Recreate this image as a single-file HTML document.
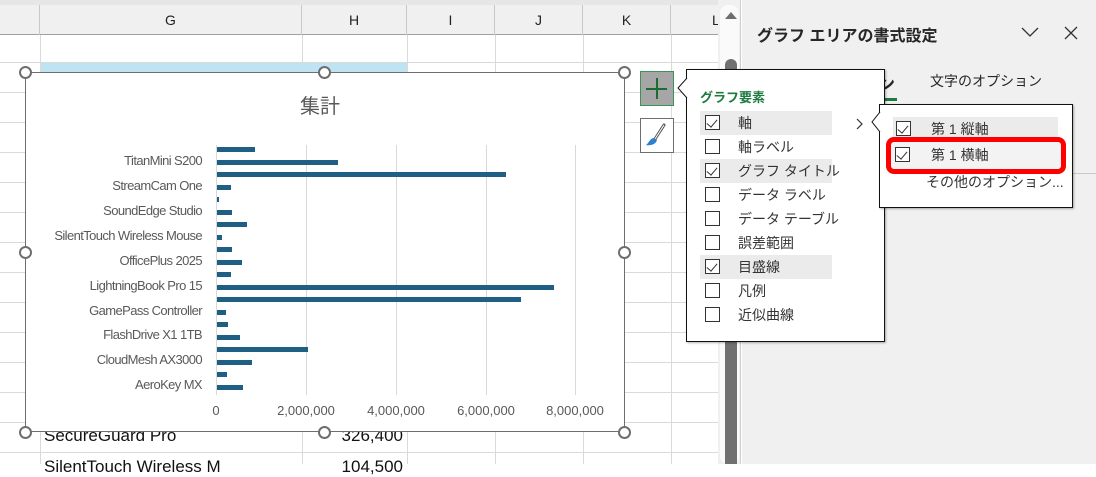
<!DOCTYPE html>
<html><head><meta charset="utf-8">
<style>
*{margin:0;padding:0;box-sizing:border-box}
body{width:1096px;height:464px;overflow:hidden;background:#fff;position:relative;font-family:"Liberation Sans","Noto Sans CJK JP",sans-serif;}
.a{position:absolute}
.vl{position:absolute;top:35px;width:1px;height:429px;background:#dadada}
.hl{position:absolute;left:0;width:718px;height:1px;background:#dadada}
.ch{position:absolute;top:5px;height:30px;font-size:14px;color:#222;text-align:center;line-height:30px;border-right:1px solid #c8c8c8}
.lab{position:absolute;right:894px;font-size:13px;color:#595959;letter-spacing:-0.6px;white-space:nowrap}
.bar{position:absolute;left:217px;height:5px;background:#1f5f83}
.hd{position:absolute;width:13px;height:13px;border:2px solid #6e6e6e;border-radius:50%;background:#fff}
.it{position:absolute;left:700px;width:132px;height:24px;font-size:14px;color:#333;line-height:24px}
.it.h{background:#ebebeb}
.cb{position:absolute;left:5px;top:4px;width:15px;height:15px;border:1px solid #333;background:#fff}
.cb.k::after{content:"";position:absolute;left:3px;top:1px;width:5px;height:9px;border-right:1px solid #333;border-bottom:1px solid #333;transform:rotate(40deg)}
.it span{position:absolute;left:38px;white-space:nowrap}
</style></head><body>
<div class="a" style="left:0;top:0;width:718px;height:5px;background:#e6e6e6"></div>
<div class="a" style="left:0;top:5px;width:718px;height:30px;background:#f0f0f0;border-bottom:1px solid #a0a0a0"></div>
<div class="ch" style="left:0;width:40px">&nbsp;</div>
<div class="ch" style="left:40px;width:262px">G</div>
<div class="ch" style="left:302px;width:105px">H</div>
<div class="ch" style="left:407px;width:88px">I</div>
<div class="ch" style="left:495px;width:88px">J</div>
<div class="ch" style="left:583px;width:88px">K</div>
<div class="ch" style="left:671px;width:47px;border:none;text-align:left;padding-left:41px">L</div>
<div class="vl" style="left:40px"></div><div class="vl" style="left:302px"></div><div class="vl" style="left:407px"></div><div class="vl" style="left:495px"></div><div class="vl" style="left:583px"></div><div class="vl" style="left:671px"></div>
<div class="hl" style="top:62px"></div><div class="hl" style="top:92px"></div><div class="hl" style="top:122px"></div><div class="hl" style="top:152px"></div><div class="hl" style="top:182px"></div><div class="hl" style="top:212px"></div><div class="hl" style="top:242px"></div><div class="hl" style="top:272px"></div><div class="hl" style="top:302px"></div><div class="hl" style="top:332px"></div><div class="hl" style="top:362px"></div><div class="hl" style="top:392px"></div><div class="hl" style="top:422px"></div><div class="hl" style="top:452px"></div>
<div class="a" style="left:41px;top:63px;width:366px;height:29px;background:#bfe3f3"></div>
<div class="a" style="left:44px;top:426px;font-size:17px;color:#111">SecureGuard Pro</div>
<div class="a" style="left:300px;top:426px;width:103px;text-align:right;font-size:17px;color:#111">326,400</div>
<div class="a" style="left:44px;top:457px;font-size:17px;color:#111">SilentTouch Wireless M</div>
<div class="a" style="left:300px;top:457px;width:103px;text-align:right;font-size:17px;color:#111">104,500</div>
<div class="a" style="left:25px;top:72px;width:600px;height:360px;background:#fff;border:1px solid #6e6e6e"></div>
<div class="a" style="left:300px;top:90px;font-size:20px;color:#595959">集計</div>
<div class="a" style="left:306px;top:145px;width:1px;height:250px;background:#d9d9d9"></div>
<div class="a" style="left:396px;top:145px;width:1px;height:250px;background:#d9d9d9"></div>
<div class="a" style="left:486px;top:145px;width:1px;height:250px;background:#d9d9d9"></div>
<div class="a" style="left:575px;top:145px;width:1px;height:250px;background:#d9d9d9"></div>
<div class="a" style="left:216px;top:145px;width:1px;height:250px;background:#d9d9d9"></div>
<div class="bar" style="top:147px;width:38px"></div><div class="bar" style="top:160px;width:121px"></div><div class="bar" style="top:172px;width:289px"></div><div class="bar" style="top:185px;width:14px"></div><div class="bar" style="top:197px;width:2px"></div><div class="bar" style="top:210px;width:15px"></div><div class="bar" style="top:222px;width:30px"></div><div class="bar" style="top:235px;width:5px"></div><div class="bar" style="top:247px;width:15px"></div><div class="bar" style="top:260px;width:25px"></div><div class="bar" style="top:272px;width:14px"></div><div class="bar" style="top:285px;width:337px"></div><div class="bar" style="top:297px;width:304px"></div><div class="bar" style="top:310px;width:9px"></div><div class="bar" style="top:322px;width:11px"></div><div class="bar" style="top:335px;width:23px"></div><div class="bar" style="top:347px;width:91px"></div><div class="bar" style="top:360px;width:35px"></div><div class="bar" style="top:372px;width:10px"></div><div class="bar" style="top:385px;width:26px"></div>
<div class="lab" style="top:153px">TitanMini S200</div>
<div class="lab" style="top:178px">StreamCam One</div>
<div class="lab" style="top:203px">SoundEdge Studio</div>
<div class="lab" style="top:228px">SilentTouch Wireless Mouse</div>
<div class="lab" style="top:253px">OfficePlus 2025</div>
<div class="lab" style="top:278px">LightningBook Pro 15</div>
<div class="lab" style="top:303px">GamePass Controller</div>
<div class="lab" style="top:327px">FlashDrive X1 1TB</div>
<div class="lab" style="top:352px">CloudMesh AX3000</div>
<div class="lab" style="top:377px">AeroKey MX</div>
<div class="a" style="left:176px;top:403px;width:80px;text-align:center;font-size:13px;color:#595959">0</div>
<div class="a" style="left:256px;top:403px;width:100px;text-align:center;font-size:13px;color:#595959">2,000,000</div>
<div class="a" style="left:346px;top:403px;width:100px;text-align:center;font-size:13px;color:#595959">4,000,000</div>
<div class="a" style="left:436px;top:403px;width:100px;text-align:center;font-size:13px;color:#595959">6,000,000</div>
<div class="a" style="left:525px;top:403px;width:100px;text-align:center;font-size:13px;color:#595959">8,000,000</div>
<div class="hd" style="left:19px;top:66px"></div><div class="hd" style="left:318px;top:66px"></div><div class="hd" style="left:618px;top:66px"></div>
<div class="hd" style="left:19px;top:246px"></div><div class="hd" style="left:618px;top:246px"></div>
<div class="hd" style="left:19px;top:426px"></div><div class="hd" style="left:318px;top:426px"></div><div class="hd" style="left:618px;top:426px"></div>
<div class="a" style="left:640px;top:71px;width:34px;height:35px;background:#a6a6a6;border:1px solid #3f8f5a"></div>
<div class="a" style="left:646px;top:88px;width:21px;height:1.5px;background:#1e6b30"></div>
<div class="a" style="left:656px;top:78px;width:1.5px;height:21px;background:#1e6b30"></div>
<div class="a" style="left:640px;top:118px;width:34px;height:35px;background:#fff;border:1px solid #6e6e6e"></div>
<svg class="a" style="left:640px;top:118px" width="34" height="35"><path d="M24 7 L15 21" stroke="#555" stroke-width="3" stroke-linecap="round"/><path d="M24 7 L15 21" stroke="#fff" stroke-width="1"/><path d="M14 20 C10 20 9 25 6 27 C11 28 16 26 17 22 Z" fill="#2f7fd0"/></svg>
<div class="a" style="left:718px;top:0;width:23px;height:464px;background:#f0f0f0;border-right:1px solid #cfcfcf"></div>
<div class="a" style="left:720px;top:5px;width:19px;height:459px;background:#fafafa;border-radius:8px"></div>
<div class="a" style="left:725px;top:12px;width:0;height:0;border-left:6px solid transparent;border-right:6px solid transparent;border-bottom:7px solid #6e6e6e"></div>
<div class="a" style="left:725px;top:59px;width:12px;height:405px;background:#707070;border-radius:6px 6px 0 0"></div>
<div class="a" style="left:742px;top:0;width:354px;height:464px;background:#f0f0f0"></div>
<div class="a" style="left:757px;top:22px;font-size:16px;font-weight:bold;color:#262626">グラフ エリアの書式設定</div>
<svg class="a" style="left:1020px;top:24px" width="20" height="16"><path d="M2 4 L10 12 L18 4" stroke="#333" stroke-width="1.3" fill="none"/></svg>
<svg class="a" style="left:1062px;top:24px" width="18" height="18"><path d="M3 3 L15 15 M15 3 L3 15" stroke="#333" stroke-width="1.3"/></svg>
<div class="a" style="left:884px;top:69px;width:20px;height:22px;overflow:hidden"><div style="position:absolute;left:-6px;top:1px;font-size:17px;font-weight:bold;color:#262626">ン</div></div>
<div class="a" style="left:884px;top:98px;width:13px;height:3px;background:#1d7b3f"></div>
<div class="a" style="left:930px;top:71px;font-size:14px;color:#262626">文字のオプション</div>
<div class="a" style="left:1072px;top:173px;width:24px;height:1px;background:#c8c8c8"></div>
<div class="a" style="left:686px;top:69px;width:199px;height:273px;background:#fff;border:1px solid #111;box-shadow:1px 1px 2px rgba(0,0,0,.3)"></div>
<svg class="a" style="left:677px;top:78px" width="11" height="22"><path d="M10 0 L1 10 L10 20" fill="#fff" stroke="#111" stroke-width="1"/></svg>
<div class="a" style="left:700px;top:87px;font-size:13px;font-weight:bold;color:#1d7b3f">グラフ要素</div>
<div class="it h" style="top:111px"><div class="cb k"></div><span>軸</span></div>
<div class="it" style="top:135px"><div class="cb"></div><span>軸ラベル</span></div>
<div class="it h" style="top:159px"><div class="cb k"></div><span>グラフ タイトル</span></div>
<div class="it" style="top:183px"><div class="cb"></div><span>データ ラベル</span></div>
<div class="it" style="top:207px"><div class="cb"></div><span>データ テーブル</span></div>
<div class="it" style="top:231px"><div class="cb"></div><span>誤差範囲</span></div>
<div class="it h" style="top:255px"><div class="cb k"></div><span>目盛線</span></div>
<div class="it" style="top:279px"><div class="cb"></div><span>凡例</span></div>
<div class="it" style="top:303px"><div class="cb"></div><span>近似曲線</span></div>
<svg class="a" style="left:855px;top:117px" width="10" height="14"><path d="M2 2 L7 7 L2 12" stroke="#333" stroke-width="1.2" fill="none"/></svg>
<div class="a" style="left:879px;top:104px;width:194px;height:104px;background:#fff;border:1px solid #111;box-shadow:1px 1px 2px rgba(0,0,0,.3)"></div>
<svg class="a" style="left:871px;top:112px" width="10" height="22"><path d="M9 0 L1 10 L9 20" fill="#fff" stroke="#111" stroke-width="1"/></svg>
<div class="it h" style="left:893px;top:117px;width:165px"><div class="cb k" style="left:3px"></div><span style="left:38px">第 1 縦軸</span></div>
<div class="a" style="left:886px;top:137px;width:180px;height:37px;border:5px solid #f00;border-radius:8px;background:#f3f3f3"></div>
<div class="it" style="left:893px;top:143px;width:160px"><div class="cb k" style="left:2px"></div><span style="left:38px">第 1 横軸</span></div>
<div class="a" style="left:926px;top:172px;font-size:14px;color:#333">その他のオプション...</div>
</body></html>
